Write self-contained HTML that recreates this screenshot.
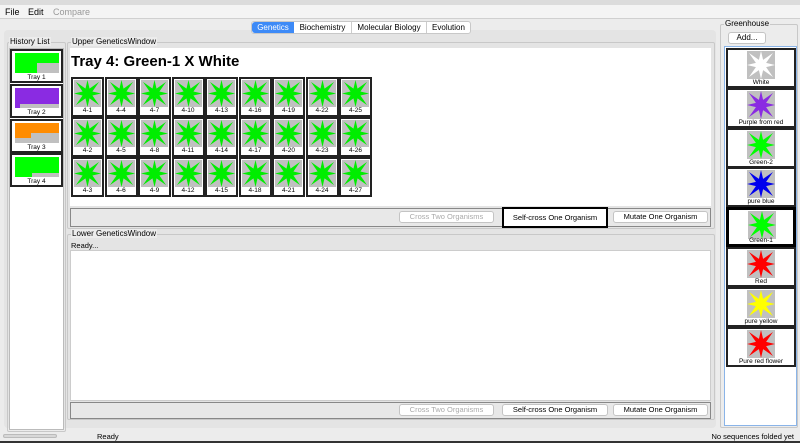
<!DOCTYPE html>
<html><head><meta charset="utf-8"><style>
*{box-sizing:border-box;margin:0;padding:0}
body{width:800px;height:443px;overflow:hidden;background:#ececec;font-family:"Liberation Sans",sans-serif;position:relative;font-size:8px;color:#000}
.a{position:absolute}
.grp{position:absolute;border:1px solid #c8c8c8;border-radius:2px}
.lbl{position:absolute;font-size:8px;background:#ececec;padding:0 1px}
.cell{position:absolute;width:33px;height:40px;border:2px solid #222;background:#fff}
.cell svg{position:absolute;left:1px;top:1px}
.cell span{position:absolute;left:0;right:0;bottom:0;text-align:center;font-size:6.5px;color:#000;line-height:8px}
.btn{position:absolute;height:12px;background:#fff;border:1px solid #c4c4c4;border-radius:3px;font-size:7.5px;text-align:center;line-height:10px}
.tray{position:absolute;left:10px;width:53px;height:34px;border:2px solid #222;background:#fff}
.tray span{position:absolute;left:0;right:0;bottom:0;text-align:center;font-size:6.5px}
.gh{position:absolute;left:726px;width:70px;height:40px;border:2px solid #222;background:#fff}
.gh svg{position:absolute;left:19px;top:1px}
.gh span{position:absolute;left:0;right:0;bottom:0;text-align:center;font-size:6.5px;white-space:nowrap;color:#000}
</style></head><body>
<svg width="0" height="0" style="position:absolute"><defs>
<g id="st"><rect width="28" height="28" fill="#c0c0c0"/><polygon points="14,0 16.1,8.9 26,2 19.1,11.9 28,14 19.1,16.1 26,26 16.1,19.1 14,28 11.9,19.1 2,26 8.9,16.1 0,14 8.9,11.9 2,2 11.9,8.9" fill="currentColor"/></g>
</defs></svg>
<div class="a" style="left:0;top:0;width:800px;height:5px;background:#dcdcdc"></div>
<div class="a" style="left:0;top:5px;width:800px;height:14px;background:#f4f4f4;border-bottom:1px solid #d0d0d0;font-size:9px;line-height:14px">
<span style="position:absolute;left:5px">File</span><span style="position:absolute;left:28px">Edit</span><span style="position:absolute;left:53px;color:#999">Compare</span></div>
<div class="a" style="left:4px;top:30px;width:712px;height:398px;background:#e4e4e4;border-radius:4px"></div>
<div class="a" style="left:251px;top:21px;height:13px;display:flex;font-size:8px;line-height:11px;border:1px solid #c8c8c8;border-radius:3px;background:#fff">
<div style="width:42px;text-align:center;background:#3d8af7;color:#fff;border-radius:3px 0 0 3px">Genetics</div>
<div style="width:58px;text-align:center;border-right:1px solid #ccc">Biochemistry</div>
<div style="width:75px;text-align:center;border-right:1px solid #ccc">Molecular Biology</div>
<div style="width:43px;text-align:center">Evolution</div></div>
<div class="grp" style="left:7px;top:42px;width:59px;height:390px"></div>
<div class="lbl" style="left:9px;top:37px">History List</div>
<div class="a" style="left:9px;top:48px;width:55px;height:382px;background:#fff;border:1px solid #bbb"></div>
<div class="tray" style="top:49px"><div class="a" style="left:3px;top:2px;width:44px;height:20px;background:#c0c0c0"></div><div class="a" style="left:3px;top:2px;width:44px;height:10px;background:#0f0"></div><div class="a" style="left:3px;top:12px;width:22px;height:10px;background:#0f0"></div><span>Tray 1</span></div>
<div class="tray" style="top:84px"><div class="a" style="left:3px;top:2px;width:44px;height:20px;background:#c0c0c0"></div><div class="a" style="left:3px;top:2px;width:44px;height:16px;background:#8a2be2"></div><div class="a" style="left:3px;top:18px;width:5px;height:4px;background:#8a2be2"></div><span>Tray 2</span></div>
<div class="tray" style="top:119px"><div class="a" style="left:3px;top:2px;width:44px;height:20px;background:#c0c0c0"></div><div class="a" style="left:3px;top:2px;width:44px;height:10px;background:#ff8c00"></div><div class="a" style="left:3px;top:12px;width:16px;height:5px;background:#ff8c00"></div><span>Tray 3</span></div>
<div class="tray" style="top:153px"><div class="a" style="left:3px;top:2px;width:44px;height:20px;background:#c0c0c0"></div><div class="a" style="left:3px;top:2px;width:44px;height:16px;background:#0f0"></div><div class="a" style="left:3px;top:18px;width:17px;height:4px;background:#0f0"></div><span>Tray 4</span></div>

<div class="grp" style="left:67px;top:42px;width:648px;height:187px"></div>
<div class="lbl" style="left:71px;top:37px">Upper GeneticsWindow</div>
<div class="a" style="left:70px;top:48px;width:641px;height:158px;background:#fff"></div>
<div class="a" style="left:71px;top:53px;font-size:15px;font-weight:bold">Tray 4: Green-1 X White</div>
<div id="grid"></div>
<div class="a" style="left:70px;top:208px;width:641px;height:19px;border:1px solid #888;background:#e8e8e8"></div>
<div class="btn" style="left:399px;top:211px;width:95px;color:#aaa">Cross Two Organisms</div>
<div class="a" style="left:502px;top:207px;width:106px;height:21px;border:2px solid #000;background:#fff;font-size:7.5px;text-align:center;line-height:17px">Self-cross One Organism</div>
<div class="btn" style="left:613px;top:211px;width:95px">Mutate One Organism</div>

<div class="grp" style="left:67px;top:234px;width:648px;height:186px"></div>
<div class="lbl" style="left:71px;top:229px">Lower GeneticsWindow</div>
<div class="a" style="left:71px;top:241px;font-size:7.5px">Ready...</div>
<div class="a" style="left:70px;top:250px;width:641px;height:151px;background:#fff;border:1px solid #ccc"></div>
<div class="a" style="left:70px;top:402px;width:641px;height:17px;border:1px solid #888;background:#e8e8e8"></div>
<div class="btn" style="left:399px;top:404px;width:95px;color:#aaa">Cross Two Organisms</div>
<div class="btn" style="left:502px;top:404px;width:106px">Self-cross One Organism</div>
<div class="btn" style="left:613px;top:404px;width:95px">Mutate One Organism</div>

<div class="grp" style="left:720px;top:24px;width:78px;height:404px"></div>
<div class="lbl" style="left:724px;top:19px">Greenhouse</div>
<div class="btn" style="left:728px;top:32px;width:38px;font-size:8px">Add...</div>
<div class="a" style="left:724px;top:46px;width:73px;height:380px;background:#fff;border:1px solid #8ab4e8"></div>
<div id="gh"></div>

<div class="a" style="left:3px;top:434px;width:54px;height:4px;background:#d8d8d8;border:1px solid #bbb;border-radius:2px"></div>
<div class="a" style="left:97px;top:432px;font-size:7.5px">Ready</div>
<div class="a" style="right:6px;top:432px;font-size:7.5px">No sequences folded yet</div>
<div class="a" style="left:0;top:441px;width:800px;height:2px;background:#333"></div>
<script>
var g='';for(var c=0;c<9;c++)for(var r=0;r<3;r++){var n=c*3+r+1;g+='<div class="cell" style="left:'+(71+c*33.5)+'px;top:'+(77+r*40)+'px;color:#00ee00"><svg width="27" height="27" viewBox="0 0 28 28"><use href="#st"/></svg><span>4-'+n+'</span></div>';}
document.getElementById('grid').innerHTML=g;
var it=[['White','#fff',48],['Purple from red','#8a2be2',88],['Green-2','#0f0',128],['pure blue','#0000ee',167],['Green-1','#0f0',207],['Red','#f00',247],['pure yellow','#ff0',287],['Pure red flower','#f00',327]];
var h='';it.forEach(function(x){var b=x[0]=='Green-1'?'border:3px solid #000;':'';h+='<div class="gh" style="top:'+x[2]+'px;color:'+x[1]+';'+b+'"><svg width="28" height="28"><use href="#st"/></svg><span>'+x[0]+'</span></div>';});
document.getElementById('gh').innerHTML=h;
</script>
</body></html>
